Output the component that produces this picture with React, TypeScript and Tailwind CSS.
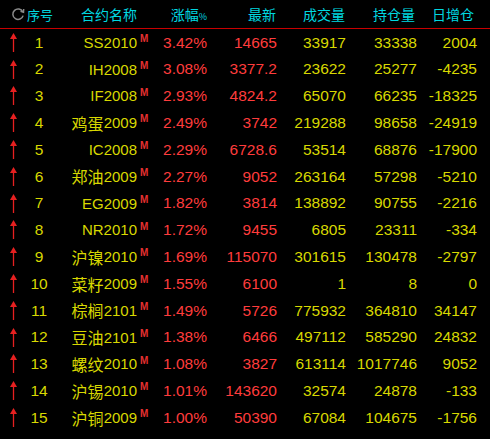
import React from "react";

type Row = {
  name: string;
  pct: string;
  last: string;
  vol: string;
  hold: string;
  daily: string;
};

const rows: Row[] = [
  { name: "SS2010", pct: "3.42%", last: "14665", vol: "33917", hold: "33338", daily: "2004" },
  { name: "IH2008", pct: "3.08%", last: "3377.2", vol: "23622", hold: "25277", daily: "-4235" },
  { name: "IF2008", pct: "2.93%", last: "4824.2", vol: "65070", hold: "66235", daily: "-18325" },
  { name: "鸡蛋2009", pct: "2.49%", last: "3742", vol: "219288", hold: "98658", daily: "-24919" },
  { name: "IC2008", pct: "2.29%", last: "6728.6", vol: "53514", hold: "68876", daily: "-17900" },
  { name: "郑油2009", pct: "2.27%", last: "9052", vol: "263164", hold: "57298", daily: "-5210" },
  { name: "EG2009", pct: "1.82%", last: "3814", vol: "138892", hold: "90755", daily: "-2216" },
  { name: "NR2010", pct: "1.72%", last: "9455", vol: "6805", hold: "23311", daily: "-334" },
  { name: "沪镍2010", pct: "1.69%", last: "115070", vol: "301615", hold: "130478", daily: "-2797" },
  { name: "菜籽2009", pct: "1.55%", last: "6100", vol: "1", hold: "8", daily: "0" },
  { name: "棕榈2101", pct: "1.49%", last: "5726", vol: "775932", hold: "364810", daily: "34147" },
  { name: "豆油2101", pct: "1.38%", last: "6466", vol: "497112", hold: "585290", daily: "24832" },
  { name: "螺纹2010", pct: "1.08%", last: "3827", vol: "613114", hold: "1017746", daily: "9052" },
  { name: "沪锡2010", pct: "1.01%", last: "143620", vol: "32574", hold: "24878", daily: "-133" },
  { name: "沪铜2009", pct: "1.00%", last: "50390", vol: "67084", hold: "104675", daily: "-1756" },
];

// split "鸡蛋2009" into cjk part and code part
function splitName(name: string) {
  const m = name.match(/^([^\x00-\x7f]*)(.*)$/);
  return { cn: m ? m[1] : "", code: m ? m[2] : name };
}

function RefreshIcon() {
  return (
    <svg width="14" height="14" viewBox="0 0 15 15" fill="none">
      <path d="M12.6 5.2 A5.6 5.6 0 1 0 13 9.2" stroke="#8a8a8a" strokeWidth="1.6" />
      <path d="M10.2 4.6 L13.4 5.6 L13.6 2.2" stroke="#8a8a8a" strokeWidth="1.6" fill="none" />
    </svg>
  );
}

function UpArrow() {
  return (
    <svg width="9" height="19" viewBox="0 0 9 19">
      <line x1="4.5" y1="3" x2="4.5" y2="19" stroke="#e62020" strokeWidth="1.3" />
      <path d="M4.5 0 L8 6 L1 6 Z" fill="#e62020" />
    </svg>
  );
}

export default function App() {
  return (
    <div
      className="w-[490px] h-[439px] bg-black overflow-hidden"
      style={{ fontFamily: '"Liberation Sans", "Noto Sans CJK SC", sans-serif' }}
    >
      {/* header */}
      <div className="flex h-[28px] items-center text-[#00d8e0] text-[14px] leading-none whitespace-nowrap" style={{ fontFamily: '"Noto Sans CJK SC", sans-serif' }}>
        <div className="w-[53px] flex items-center pl-[11px] gap-[2px]">
          <RefreshIcon />
          <span className="text-[13px]">序号</span>
        </div>
        <div className="w-[84px] flex justify-end">合约名称</div>
        <div className="w-[70px] flex justify-end items-baseline">
          涨幅<span className="text-[9px]">%</span>
        </div>
        <div className="w-[69px] flex justify-end">最新</div>
        <div className="w-[69px] flex justify-end">成交量</div>
        <div className="w-[70px] flex justify-end">持仓量</div>
        <div className="w-[59px] flex justify-end">日增仓</div>
      </div>
      <div className="h-[1px] bg-[#c80000]" />

      {rows.map((r, i) => {
        const { cn, code } = splitName(r.name);
        return (
          <div key={i} className="flex h-[26.8px] items-center text-[15.5px] leading-none whitespace-nowrap">
            <div className="w-[26px] flex justify-center">
              <UpArrow />
            </div>
            <div className="w-[26px] text-center text-[#d8d800]">{i + 1}</div>
            <div className="w-[85px] flex justify-end items-center text-[#d8d800]">
              {cn && (
                <span className="text-[16px]" style={{ fontFamily: '"Noto Sans CJK SC", sans-serif' }}>
                  {cn}
                </span>
              )}
              <span className="text-[15px]">{code}</span>
            </div>
            <div className="w-[18px] self-start pt-[5px] pl-[3px] text-[10px] font-bold text-[#e63030]">M</div>
            <div className="w-[52px] text-right text-[#ff3c3c]">{r.pct}</div>
            <div className="w-[70px] text-right text-[#ff3c3c]">{r.last}</div>
            <div className="w-[69px] text-right text-[#d8d800]">{r.vol}</div>
            <div className="w-[71px] text-right text-[#d8d800]">{r.hold}</div>
            <div className="w-[60px] text-right text-[#d8d800]">{r.daily}</div>
          </div>
        );
      })}
    </div>
  );
}
